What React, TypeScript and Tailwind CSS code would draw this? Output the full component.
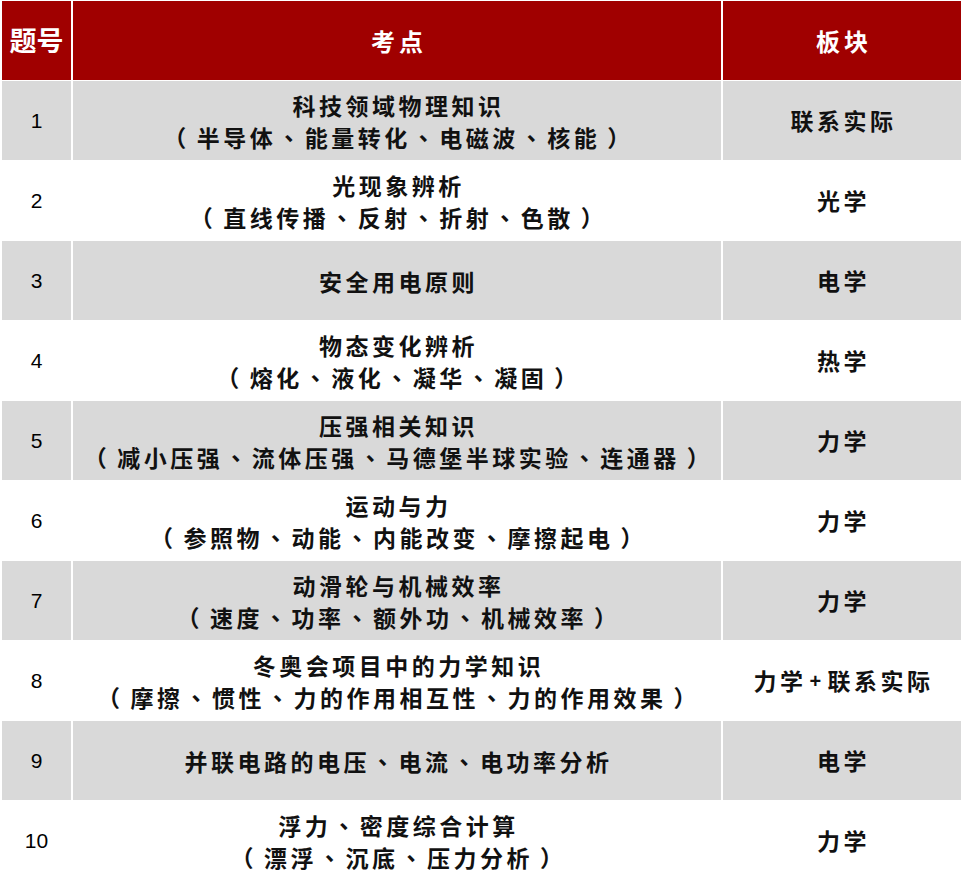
import React from 'react';

interface Row {
  no: string;
  lines: string[];
  block: string;
}

const rows: Row[] = [
  { no: '1', lines: ['科技领域物理知识', '（半导体、能量转化、电磁波、核能）'], block: '联系实际' },
  { no: '2', lines: ['光现象辨析', '（直线传播、反射、折射、色散）'], block: '光学' },
  { no: '3', lines: ['安全用电原则'], block: '电学' },
  { no: '4', lines: ['物态变化辨析', '（熔化、液化、凝华、凝固）'], block: '热学' },
  { no: '5', lines: ['压强相关知识', '（减小压强、流体压强、马德堡半球实验、连通器）'], block: '力学' },
  { no: '6', lines: ['运动与力', '（参照物、动能、内能改变、摩擦起电）'], block: '力学' },
  { no: '7', lines: ['动滑轮与机械效率', '（速度、功率、额外功、机械效率）'], block: '力学' },
  { no: '8', lines: ['冬奥会项目中的力学知识', '（摩擦、惯性、力的作用相互性、力的作用效果）'], block: '力学+联系实际' },
  { no: '9', lines: ['并联电路的电压、电流、电功率分析'], block: '电学' },
  { no: '10', lines: ['浮力、密度综合计算', '（漂浮、沉底、压力分析）'], block: '力学' },
];

const cjk = "font-['Noto_Sans_CJK_SC','Noto_Sans',sans-serif]";
const tc = "font-['Noto_Sans_CJK_TC',sans-serif]";

// punctuation sits centred in its cell in the source, as in the TC face
const Punct: React.FC<{ text: string }> = ({ text }) => (
  <>
    {text.split(/([（）、+])/).map((part, i) => {
      if (part === '（') return <span key={i} className={`${tc} mr-[7px]`}>{part}</span>;
      if (part === '）') return <span key={i} className={`${tc} ml-[7px]`}>{part}</span>;
      if (part === '、') return <span key={i} className={`${tc} mx-[1px]`}>{part}</span>;
      if (part === '+')
        return (
          <span key={i} className="font-['Liberation_Sans',sans-serif] text-[20px] mx-[3px]">
            {part}
          </span>
        );
      return part;
    })}
  </>
);

export default function App() {
  return (
    <div className="w-[961px] h-[892px] bg-white pt-[1px] pl-[2px] overflow-hidden">
      <div className="grid grid-cols-[69px_648px_1fr] gap-x-[2px] gap-y-[1px]">
        {/* header */}
        <div className={`h-[79px] bg-[#a00000] text-white flex items-center justify-center text-[27px] font-bold ${cjk}`}>
          题号
        </div>
        <div className={`h-[79px] bg-[#a00000] text-white flex items-center justify-center text-[24px] font-bold tracking-[4px] pl-[4px] ${cjk}`}>
          考点
        </div>
        <div className={`h-[79px] bg-[#a00000] text-white flex items-center justify-center text-[24px] font-bold tracking-[4px] pl-[4px] ${cjk}`}>
          板块
        </div>

        {rows.map((row, i) => {
          const bg = i % 2 === 0 ? 'bg-[#d9d9d9]' : 'bg-white';
          return (
            <React.Fragment key={row.no}>
              <div className={`h-[79px] ${bg} flex items-center justify-center text-[21px] text-black font-['Liberation_Sans',Arial,sans-serif]`}>
                {row.no}
              </div>
              <div className={`h-[79px] ${bg} flex flex-col items-center justify-center text-[23px] leading-[32px] font-bold text-[#111] tracking-[3.5px] pl-[3px] ${cjk}`}>
                {row.lines.map((l) => (
                  <span key={l}>
                    <Punct text={l} />
                  </span>
                ))}
              </div>
              <div className={`h-[79px] ${bg} flex items-center justify-center text-[23px] font-bold text-[#111] tracking-[3.5px] pl-[3px] ${cjk}`}>
                <Punct text={row.block} />
              </div>
            </React.Fragment>
          );
        })}
      </div>
    </div>
  );
}
